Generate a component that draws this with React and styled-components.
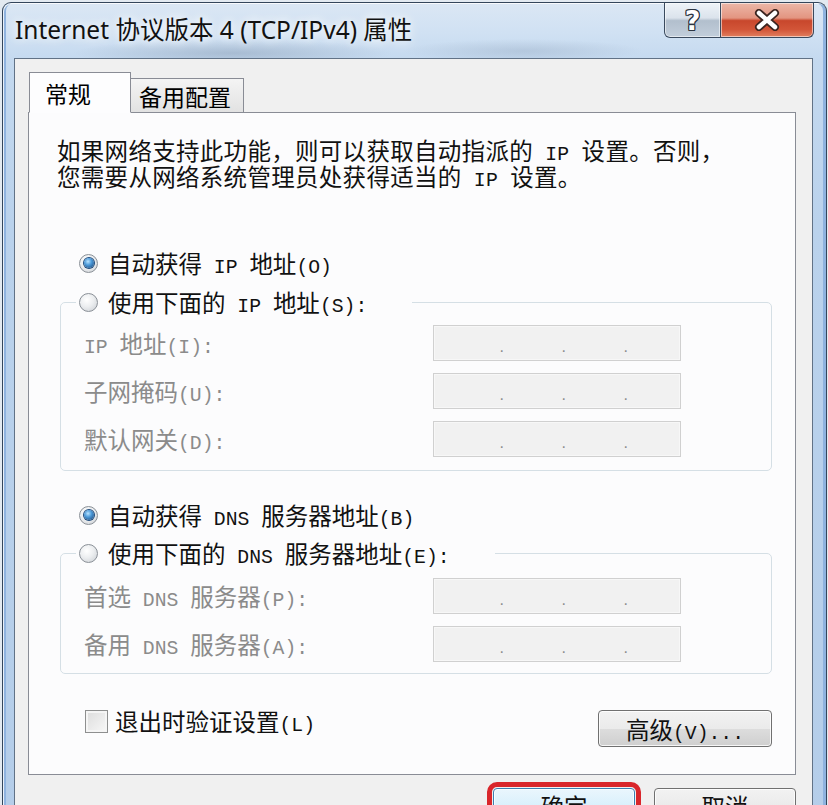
import React from "react";
import styled, { createGlobalStyle } from "styled-components";

const GlobalStyle = createGlobalStyle`
  html, body { margin: 0; padding: 0; }
  body {
    width: 828px;
    height: 805px;
    overflow: hidden;
    background: #e3eaf1;
    font-family: "Noto Sans CJK SC", "Noto Sans", sans-serif;
  }
`;

const Window = styled.div`
  box-sizing: border-box;
  margin: 2px 0 0 2px;
  width: 825px;
  height: 860px;
  border: 1px solid #34465b;
  border-bottom: none;
  border-radius: 9px 9px 0 0;
  display: flex;
  flex-direction: column;
  background:
    radial-gradient(ellipse 160px 14px at 230px 50px, rgba(110, 130, 155, 0.35), transparent),
    radial-gradient(ellipse 120px 12px at 520px 48px, rgba(120, 140, 165, 0.25), transparent),
    linear-gradient(180deg, #dbe7f4 0px, #d0e1f3 30px, #c4d9ef 58px, #bad2ec 220px, #b4cde9 100%);
  box-shadow: inset 1px 1px 0 rgba(255, 255, 255, 0.8), inset 3px 0 0 #8fb3df,
    inset -3px 0 0 #8fb3df;
`;

const TitleBar = styled.div`
  height: 55px;
  display: flex;
  justify-content: space-between;
  align-items: flex-start;
`;

const Title = styled.div`
  align-self: center;
  padding: 0 0 4px 12px;
  font-family: "Noto Sans", "Noto Sans CJK SC", sans-serif;
  font-size: 24.5px;
  color: #111;
  white-space: nowrap;
  text-shadow: 0 0 8px rgba(255, 255, 255, 0.95), 0 0 14px rgba(255, 255, 255, 0.8);
`;

const Controls = styled.div`
  display: flex;
  margin-right: 12px;
`;

const CaptionButton = styled.div`
  box-sizing: border-box;
  height: 35px;
  width: ${(p) => (p.$close ? "93px" : "57px")};
  display: flex;
  align-items: center;
  justify-content: center;
  border: 1px solid #3a4a5e;
  border-top: none;
  border-left: ${(p) => (p.$close ? "none" : "1px solid #3a4a5e")};
  border-radius: ${(p) => (p.$close ? "0 0 6px 0" : "0 0 0 6px")};
  background: ${(p) =>
    p.$close
      ? "linear-gradient(180deg, #ecb7a8 0%, #e39581 44%, #c8472c 52%, #d25538 78%, #e17f5f 100%)"
      : "linear-gradient(180deg, #eef3f8 0%, #dbe3ec 44%, #b2bfcd 52%, #c2cedb 100%)"};
  box-shadow: inset 0 0 0 1px rgba(255, 255, 255, 0.55);
`;

const HelpGlyph = styled.span`
  font-family: "DejaVu Sans", sans-serif;
  font-weight: 700;
  font-size: 27px;
  line-height: 1;
  color: #fff;
  text-shadow: 1px 0 0 #2c3541, -1px 0 0 #2c3541, 0 1px 0 #2c3541, 0 -1px 0 #2c3541,
    1px 1px 0 #2c3541, -1px -1px 0 #2c3541, 1px -1px 0 #2c3541, -1px 1px 0 #2c3541;
`;

const Client = styled.div`
  flex: 1;
  margin: 0 13px 0 11px;
  padding: 13px 16px 0 13px;
  border: 1px solid #617286;
  border-bottom: none;
  background: #f0f0f0;
  display: flex;
  flex-direction: column;
`;

const Tabs = styled.div`
  display: flex;
  align-items: flex-end;
  margin: 0 0 -1px 1px;
  position: relative;
  z-index: 1;
`;

const Tab = styled.div`
  box-sizing: border-box;
  height: ${(p) => (p.$active ? "41px" : "35px")};
  width: ${(p) => (p.$active ? "102px" : "113px")};
  padding-left: ${(p) => (p.$active ? "15px" : "8px")};
  display: flex;
  align-items: center;
  font-size: 23px;
  color: #000;
  border: 1px solid #898c95;
  border-left: ${(p) => (p.$active ? "1px solid #898c95" : "none")};
  border-bottom: 1px solid ${(p) => (p.$active ? "#fdfdfe" : "#898c95")};
  background: ${(p) => (p.$active ? "#fdfdfe" : "linear-gradient(180deg, #f4f4f4, #e2e2e2)")};
`;

const Panel = styled.div`
  box-sizing: border-box;
  height: 663px;
  padding: 0 23px 0 28px;
  border: 1px solid #898c95;
  background: #fcfcfd;
  display: flex;
  flex-direction: column;
  font-size: 23.5px;
  color: #111;
`;

const Text = styled.span`
  white-space: nowrap;
`;

const Lt = styled.span`
  font-family: "Liberation Mono", monospace;
  font-size: 0.84em;
  line-height: 1;
`;

const Mixed = ({ text }) => (
  <Text>
    {text.split(/([\x20-\x7e]+)/).map((part, i) =>
      /^[\x20-\x7e]+$/.test(part) ? <Lt key={i}>{part}</Lt> : part
    )}
  </Text>
);

const Intro = styled.div`
  margin-top: 24px;
  letter-spacing: 0.3px;
`;

const IntroLine = styled.div`
  height: 26px;
  line-height: 26px;
  white-space: nowrap;
`;

const RadioRow = styled.label`
  display: flex;
  align-items: center;
  gap: 10px;
  height: 30px;
  white-space: nowrap;
  margin: ${(p) => p.$mt || "0"} 0 0 ${(p) => (p.$indent ? "22px" : "0")};
`;

const Radio = styled.span`
  box-sizing: border-box;
  width: 19px;
  height: 19px;
  border-radius: 50%;
  border: 1px solid #8a9097;
  background: radial-gradient(circle at 40% 35%, #ffffff 0%, #eceef0 45%, #c9cdd2 100%);
  display: flex;
  align-items: center;
  justify-content: center;
  flex-shrink: 0;

  &::after {
    content: "";
    display: ${(p) => (p.$checked ? "block" : "none")};
    width: 10px;
    height: 10px;
    border-radius: 50%;
    background: radial-gradient(circle at 40% 35%, #b9e3ff 0%, #4c9ad9 40%, #163f72 100%);
    box-shadow: 0 0 0 1px #1d4a7c;
  }
`;

const Group = styled.fieldset`
  margin: ${(p) => p.$mt} 0 0 3px;
  padding: 0 0 ${(p) => p.$pb} 0;
  border: 1px solid #d5dfe5;
  border-radius: 5px;
  min-width: 0;
`;

const Legend = styled.legend`
  margin-left: 15px;
  padding: 0 45px 0 3px;
`;

const Fields = styled.div`
  display: grid;
  grid-template-columns: 349px 248px;
  row-gap: 12px;
  align-items: center;
  padding: ${(p) => p.$pt} 0 0 23px;
`;

const FieldLabel = styled.span`
  color: #8b8b8b;
  white-space: nowrap;
`;

const IpBox = styled.div`
  box-sizing: border-box;
  height: 36px;
  display: flex;
  align-items: flex-end;
  padding: 0 0 5px 8px;
  border: 1px solid #d0d0d0;
  background: #f1f1f1;
  box-shadow: inset 0 0 0 1px #f7f7f7;
`;

const IpSeg = styled.span`
  width: 62px;
  text-align: right;
  font-family: "Liberation Sans", sans-serif;
  font-size: 16px;
  line-height: 1;
  color: #8d8d8d;
`;

const Footer = styled.div`
  display: flex;
  justify-content: space-between;
  align-items: flex-start;
  margin-top: 36px;
`;

const CheckRow = styled.label`
  display: flex;
  align-items: center;
  gap: 7px;
  height: 24px;
  margin: -1px 0 0 28px;
  white-space: nowrap;
`;

const Checkbox = styled.span`
  box-sizing: border-box;
  width: 23px;
  height: 23px;
  border: 1px solid #8e8f8f;
  background: linear-gradient(135deg, #dcdcdc, #f8f8f8);
  box-shadow: inset 0 0 0 2px #f5f5f5;
`;

const Button = styled.div`
  box-sizing: border-box;
  width: ${(p) => p.$w || "142px"};
  height: ${(p) => p.$h || "36px"};
  display: flex;
  align-items: center;
  justify-content: center;
  border: 1px solid ${(p) => (p.$default ? "#3c7fb1" : "#707070")};
  border-radius: 4px;
  background: ${(p) =>
    p.$default
      ? "linear-gradient(180deg, #eaf6fd 0%, #d9f0fc 50%, #bee6fd 51%, #a7d9f5 100%)"
      : "linear-gradient(180deg, #f2f2f2 0%, #ebebeb 50%, #dddddd 51%, #cfcfcf 100%)"};
  box-shadow: inset 0 0 0 1px rgba(255, 255, 255, 0.8);
  font-size: 23.5px;
  color: #111;
  white-space: nowrap;
  ${(p) => p.$marked && "outline: 5px solid #d9262b; outline-offset: 1px;"}
`;

const ButtonBar = styled.div`
  display: flex;
  justify-content: flex-end;
  gap: 19px;
  margin-top: 13px;
`;

function CloseIcon() {
  return (
    <svg width="30" height="22" viewBox="0 0 30 22">
      <path d="M7 4 L23 18 M23 4 L7 18" stroke="#3b2520" strokeWidth="8" strokeLinecap="round" />
      <path d="M7 4 L23 18 M23 4 L7 18" stroke="#fff" strokeWidth="4.5" strokeLinecap="round" />
    </svg>
  );
}

function IpField() {
  return (
    <IpBox>
      <IpSeg>.</IpSeg>
      <IpSeg>.</IpSeg>
      <IpSeg>.</IpSeg>
    </IpBox>
  );
}

const ipRows = ["IP 地址(I):", "子网掩码(U):", "默认网关(D):"];
const dnsRows = ["首选 DNS 服务器(P):", "备用 DNS 服务器(A):"];

export default function App() {
  return (
    <>
      <GlobalStyle />
      <Window>
        <TitleBar>
          <Title>Internet 协议版本 4 (TCP/IPv4) 属性</Title>
          <Controls>
            <CaptionButton>
              <HelpGlyph>?</HelpGlyph>
            </CaptionButton>
            <CaptionButton $close>
              <CloseIcon />
            </CaptionButton>
          </Controls>
        </TitleBar>

        <Client>
          <Tabs>
            <Tab $active>常规</Tab>
            <Tab>备用配置</Tab>
          </Tabs>

          <Panel>
            <Intro>
              <IntroLine>
                <Mixed text="如果网络支持此功能，则可以获取自动指派的 IP 设置。否则，" />
              </IntroLine>
              <IntroLine>
                <Mixed text="您需要从网络系统管理员处获得适当的 IP 设置。" />
              </IntroLine>
            </Intro>

            <RadioRow $indent $mt="59px">
              <Radio $checked />
              <Mixed text="自动获得 IP 地址(O)" />
            </RadioRow>

            <Group $mt="9px" $pb="13px">
              <Legend>
                <RadioRow>
                  <Radio />
                  <Mixed text="使用下面的 IP 地址(S):" />
                </RadioRow>
              </Legend>
              <Fields $pt="8px">
                {ipRows.map((label) => (
                  <React.Fragment key={label}>
                    <FieldLabel>
                      <Mixed text={label} />
                    </FieldLabel>
                    <IpField />
                  </React.Fragment>
                ))}
              </Fields>
            </Group>

            <RadioRow $indent $mt="29px">
              <Radio $checked />
              <Mixed text="自动获得 DNS 服务器地址(B)" />
            </RadioRow>

            <Group $mt="8px" $pb="11px">
              <Legend>
                <RadioRow>
                  <Radio />
                  <Mixed text="使用下面的 DNS 服务器地址(E):" />
                </RadioRow>
              </Legend>
              <Fields $pt="10px">
                {dnsRows.map((label) => (
                  <React.Fragment key={label}>
                    <FieldLabel>
                      <Mixed text={label} />
                    </FieldLabel>
                    <IpField />
                  </React.Fragment>
                ))}
              </Fields>
            </Group>

            <Footer>
              <CheckRow>
                <Checkbox />
                <Mixed text="退出时验证设置(L)" />
              </CheckRow>
              <Button $w="174px" $h="37px">
                <Mixed text="高级(V)..." />
              </Button>
            </Footer>
          </Panel>

          <ButtonBar>
            <Button $default $marked>
              确定
            </Button>
            <Button>取消</Button>
          </ButtonBar>
        </Client>
      </Window>
    </>
  );
}
